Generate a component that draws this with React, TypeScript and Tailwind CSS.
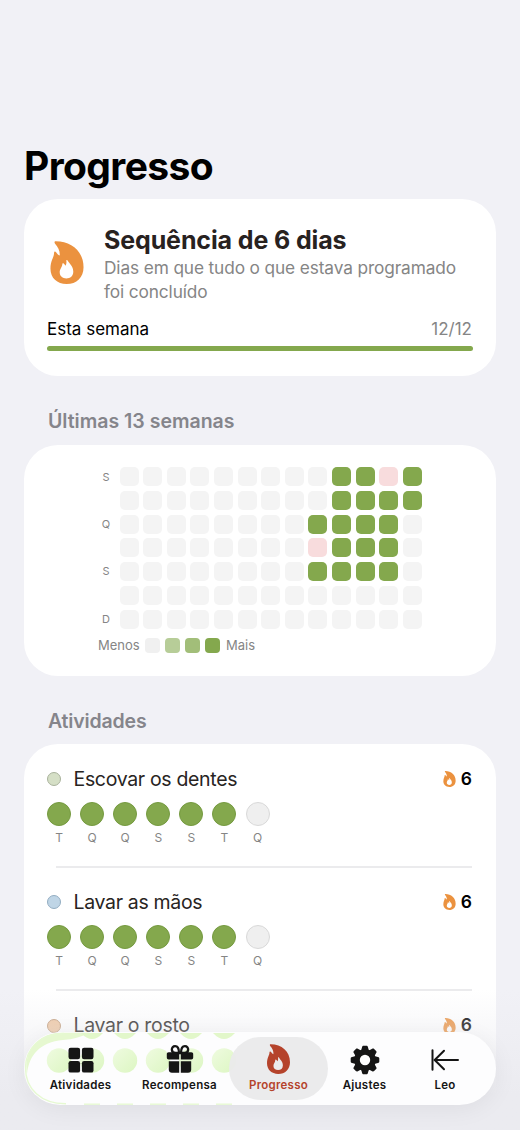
const HEATMAP = [
  '.........ggpg',
  '.........gggg',
  '........gggg.',
  '........pggg.',
  '........gggg.',
  '.............',
  '.............',
]

const ROW_LABELS = ['S', '', 'Q', '', 'S', '', 'D']
const DAYS = ['T', 'Q', 'Q', 'S', 'S', 'T', 'Q']

const ACTIVITIES = [
  { name: 'Escovar os dentes', dot: 'bg-[#d5dfc6] border-[#a9b29c]', streak: 6, week: DAYS },
  { name: 'Lavar as mãos', dot: 'bg-[#bfd5e6] border-[#93adc2]', streak: 6, week: DAYS },
  { name: 'Lavar o rosto', dot: 'bg-[#efc6a0] border-[#c09a78]', streak: 6, week: [] },
]

const CELL: Record<string, string> = {
  '.': 'bg-[#f4f4f4]',
  g: 'bg-[#84a84d]',
  p: 'bg-[#f8dcdd]',
}

function Flame({ className }: { className: string }) {
  return (
    <svg viewBox="0 0 100 130" fill="currentColor" className={className}>
      <path
        fillRule="evenodd"
        d="M16 1C12 1 11 4 14 8C23 18 29 30 28 44C23 42 20 39 17 34C15 31 11 31 11 35C11 51 0 58 0 84C0 112 20 130 49 130C79 130 100 110 100 79C100 32 64 1 16 1ZM48 60C47 57 50 56 52 59C57 69 69 76 69 93C69 106 60 113 48 113C37 113 28 106 28 95C28 84 36 80 36 69C36 67 38 66 40 68L46 75C48 71 49 66 48 60Z"
      />
    </svg>
  )
}

function GridIcon() {
  return (
    <svg viewBox="0 0 26 26" fill="currentColor" className="h-[26px] w-[26px]">
      <rect x="0.5" y="0.7" width="11.6" height="11.6" rx="2.2" />
      <rect x="13.9" y="0.7" width="11.6" height="11.6" rx="2.2" />
      <rect x="0.5" y="14" width="11.6" height="11.6" rx="2.2" />
      <rect x="13.9" y="14" width="11.6" height="11.6" rx="2.2" />
    </svg>
  )
}

function GiftIcon() {
  return (
    <svg viewBox="0 0 28 30" className="h-[30px] w-[28px]">
      <g fill="none" stroke="currentColor" strokeWidth="2.3">
        <path d="M13 9H9.5C4.6 9 4.8 2.2 9.1 2.2C12 2.2 13 5.2 13 9Z" />
        <path d="M15 9H18.5C23.4 9 23.2 2.2 18.9 2.2C16 2.2 15 5.2 15 9Z" />
      </g>
      <path
        fill="currentColor"
        d="M2.7 8.2H13.2V15.5H2.7C1.5 15.5 .8 14.8 .8 13.6V10.1C.8 8.9 1.5 8.2 2.7 8.2ZM14.8 8.2H25.3C26.5 8.2 27.2 8.9 27.2 10.1V13.6C27.2 14.8 26.5 15.5 25.3 15.5H14.8ZM2.8 17.2H13.2V28.8H6C4 28.8 2.8 27.7 2.8 25.8ZM14.8 17.2H25.2V25.8C25.2 27.7 24 28.8 22 28.8H14.8Z"
      />
    </svg>
  )
}

function GearIcon() {
  const teeth = [0, 45, 90, 135, 180, 225, 270, 315]
  return (
    <svg viewBox="-15 -15 30 30" className="h-[30px] w-[30px]">
      {teeth.map((a) => (
        <path
          key={a}
          transform={`rotate(${a})`}
          fill="currentColor"
          d="M-4.3 -8L-2.9 -13C-2.7 -13.9 -2.2 -14.3 -1.4 -14.3H1.4C2.2 -14.3 2.7 -13.9 2.9 -13L4.3 -8Z"
        />
      ))}
      <circle r="8" fill="none" stroke="currentColor" strokeWidth="5.6" />
    </svg>
  )
}

function ExitIcon() {
  return (
    <svg
      viewBox="0 0 28 22"
      fill="none"
      stroke="currentColor"
      strokeWidth="2"
      strokeLinecap="round"
      strokeLinejoin="round"
      className="h-[22px] w-[28px]"
    >
      <path d="M1.5 1.2V20.8M27 11H4M13 1.7L3.7 11L13 20.3" />
    </svg>
  )
}

// Green dots of the list showing through the glass bar
function GlassDots() {
  return (
    <svg viewBox="0 0 472 73" className="absolute inset-0 h-full w-full">
      <defs>
        <linearGradient id="dot" x1="0" y1="0" x2="1" y2="1">
          <stop offset="0" stopColor="#effbe0" />
          <stop offset="1" stopColor="#dcf6c2" />
        </linearGradient>
      </defs>
      <path d="M37 0.8H65Q54 7 39 8C16 10 5 23 3 42C-1 18 15 1 37 0.8Z" fill="#e6f8d0" />
      <path d="M42 71.8C17 72 1.5 57 1.5 36C1.5 16 17 1.5 40 1.5" fill="none" stroke="#e6f9d2" strokeWidth="1.4" />
      {[35, 68, 101, 134, 167, 200].map((x) => (
        <g key={x}>
          <circle cx={x} cy="28.5" r="12.2" fill="url(#dot)" />
          {x > 35 && <path d={`M${x - 11} 1H${x + 11}Q${x} 13 ${x - 11} 1Z`} fill="#e2f7ca" />}
          {x > 35 && <path d={`M${x - 8} 72.2H${x + 8}`} stroke="#e6f9d3" strokeWidth="1.4" />}
        </g>
      ))}
    </svg>
  )
}

export default function App() {
  return (
    <div className="relative h-[1130px] w-[520px] overflow-hidden bg-[#f1f1f6] px-6 pt-[142px] font-['Inter',sans-serif] text-black">
      <h1 className="h-[57px] text-[39px] leading-[48px] font-bold tracking-[-0.6px]">Progresso</h1>

      <section className="h-[177px] rounded-[34px] bg-white px-6 pt-[26px]">
        <div className="flex">
          <Flame className="mt-4 ml-[2px] h-[43px] w-[34px] text-[#eb923f]" />
          <div className="ml-5">
            <h2 className="text-[25px] leading-[30px] font-bold tracking-[-0.12px] whitespace-nowrap text-[#28221f]">
              Sequência de 6 dias
            </h2>
            <p className="mt-px text-[17.3px] leading-[23.5px] tracking-[-0.13px] whitespace-nowrap text-[#858585]">
              Dias em que tudo o que estava programado
              <br />
              foi concluído
            </p>
          </div>
        </div>
        <div className="-ml-px mt-[14px] flex justify-between text-[17px] leading-6">
          <span>Esta semana</span>
          <span className="text-[#858585]">12/12</span>
        </div>
        <div className="-mx-px mt-[5px] h-[5px] rounded-full bg-[#84a84d]" />
      </section>

      <h3 className="mt-[33px] ml-6 h-9 text-[19.5px] leading-6 font-semibold text-[#85858b]">Últimas 13 semanas</h3>

      <section className="h-[231px] rounded-[34px] bg-white pt-[22px]">
        <div className="ml-[75px] flex">
          <div className="grid w-[14px] grid-rows-7 gap-[4.62px] pt-px text-center text-[11px] leading-[19px] text-[#858585]">
            {ROW_LABELS.map((l, i) => (
              <span key={i} className="h-[19px]">{l}</span>
            ))}
          </div>
          <div className="ml-[6.6px] grid grid-cols-[repeat(13,19px)] gap-[4.62px]">
            {HEATMAP.join('').split('').map((c, i) => (
              <div key={i} className={`h-[19px] rounded-[5px] ${CELL[c]}`} />
            ))}
          </div>
        </div>
        <div className="mt-[6.5px] ml-[74px] flex items-center text-[13px] leading-5 text-[#858585]">
          <span className="w-[47px]">Menos</span>
          <div className="flex gap-[5px]">
            <div className="h-[15px] w-[15px] rounded-[4px] bg-[#f0f0f0]" />
            <div className="h-[15px] w-[15px] rounded-[4px] bg-[#b7cd98]" />
            <div className="h-[15px] w-[15px] rounded-[4px] bg-[#a2be79]" />
            <div className="h-[15px] w-[15px] rounded-[4px] bg-[#84a84d]" />
          </div>
          <span className="ml-[6px]">Mais</span>
        </div>
      </section>

      <h3 className="mt-[33px] ml-6 h-[35px] text-[19.5px] leading-6 font-semibold tracking-[-0.15px] text-[#85858b]">
        Atividades
      </h3>

      <section className="h-[400px] rounded-t-[34px] bg-white pr-6 pl-[23px]">
        {ACTIVITIES.map((a) => (
          <div key={a.name} className="h-[123.3px] pt-[21px]">
            <div className="flex h-7 items-center">
              <span className={`h-[14px] w-[14px] rounded-full border ${a.dot}`} />
              <span className="ml-[12.5px] pt-px text-[19.5px] tracking-[-0.33px] text-[#282422]">{a.name}</span>
              <Flame className="ml-auto h-[16px] w-[13px] text-[#eb923f]" />
              <span className="ml-[5px] text-[17.5px] font-semibold">{a.streak}</span>
            </div>
            {a.week.length > 0 && (
              <>
                <div className="mt-[9px] flex gap-[9.1px]">
                  {a.week.map((d, i) => (
                    <div key={i} className="flex w-6 flex-col items-center">
                      <div
                        className={`h-6 w-6 rounded-full border ${
                          i < 6 ? 'border-[#759a40] bg-[#84a84d]' : 'border-[#d9d9d9] bg-[#efefef]'
                        }`}
                      />
                      <span className="mt-1 text-[12px] leading-4 text-[#858585]">{d}</span>
                    </div>
                  ))}
                </div>
                <div className="mt-5 ml-[9px] h-[1.5px] bg-[#ebebed]" />
              </>
            )}
          </div>
        ))}
      </section>

      <div className="absolute inset-x-0 bottom-0 h-[140px] bg-gradient-to-b from-[#ebebf0]/0 via-[#ebebf0]/35 via-30% to-[#ebebf0] to-75%" />

      <nav className="absolute bottom-[25px] left-6 flex h-[73px] w-[472px] rounded-[36.5px] bg-[#fdfdfe] shadow-[0_4px_24px_rgba(0,0,0,0.06)]">
        <GlassDots />
        <div className="absolute top-[5px] left-[205px] h-[63px] w-[99px] rounded-[32px] bg-[#eaeaeb]/95" />
        <div className="relative flex w-full text-[11.5px] font-semibold tracking-[0.27px] text-[#151515]">
          <div className="ml-[7px] flex w-[99px] flex-col items-center">
            <div className="flex h-[45px] items-center pt-[11px]"><GridIcon /></div>
            Atividades
          </div>
          <div className="flex w-[99px] flex-col items-center">
            <div className="flex h-[45px] items-center pt-[9px]"><GiftIcon /></div>
            Recompensa
          </div>
          <div className="flex w-[99px] flex-col items-center text-[#b5432b]">
            <div className="flex h-[45px] items-center pt-[9px]">
              <Flame className="h-[30px] w-[23px]" />
            </div>
            Progresso
          </div>
          <div className="flex w-[73px] flex-col items-center">
            <div className="flex h-[45px] items-center pt-[11px]"><GearIcon /></div>
            Ajustes
          </div>
          <div className="flex w-[88px] flex-col items-center">
            <div className="flex h-[45px] items-center pt-[11px]"><ExitIcon /></div>
            Leo
          </div>
        </div>
      </nav>
    </div>
  )
}
